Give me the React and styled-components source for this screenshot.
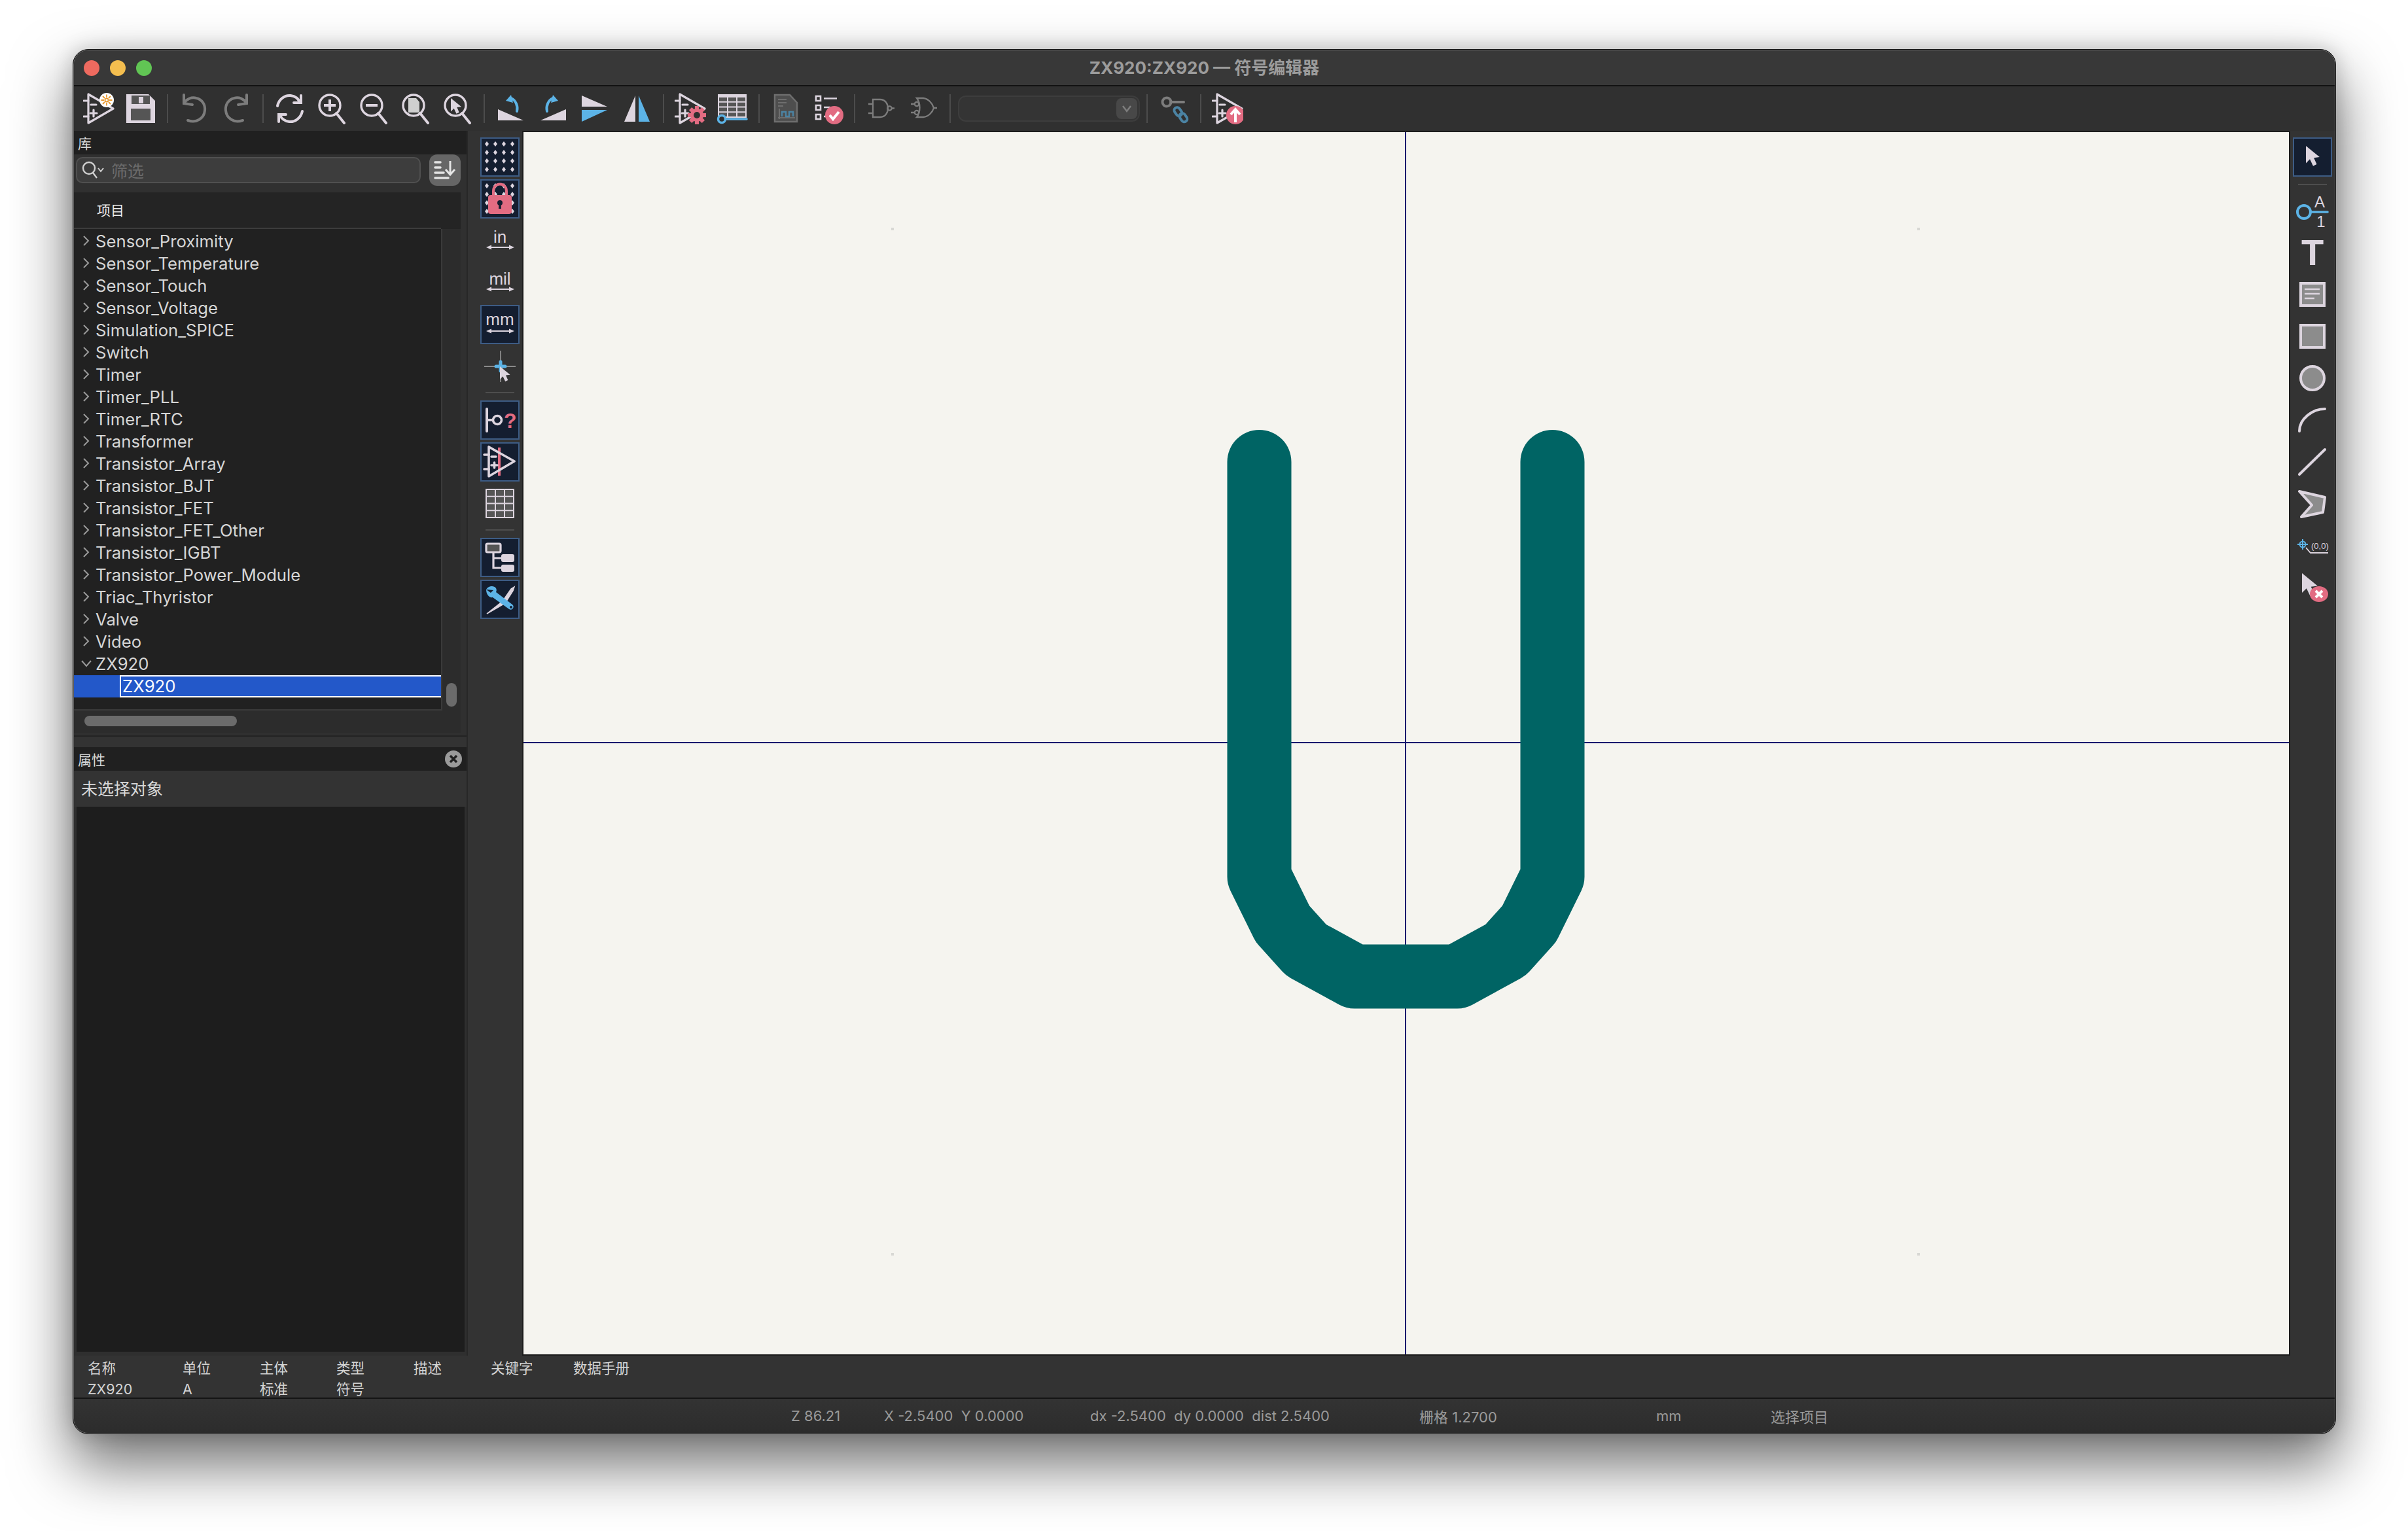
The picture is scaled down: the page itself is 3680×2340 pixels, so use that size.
import React from 'react';
import styled, { createGlobalStyle } from 'styled-components';

const L = '#DDD5DF', B = '#5CB3E6', P = '#E26C82', D = '#555555', G = '#7C7C7C', F = '#8C8C8C';
const SANS = `"Inter", "Noto Sans CJK SC", sans-serif`;

const Global = createGlobalStyle`
  html, body { margin: 0; padding: 0; background: #fff; }
  body { font-family: ${SANS}; }
`;
const Page = styled.div`
  width: 3680px; height: 2340px; box-sizing: border-box; padding: 75px 110px 148px 111px; background: #fff; overflow: hidden;
`;
const Window = styled.div`
  height: 100%; box-sizing: border-box; display: flex; flex-direction: column;
  background: #333; border: 1px solid #141414; border-radius: 24px; overflow: hidden;
  box-shadow: inset 0 0 0 1px #6a6a6a, 0 44px 90px 4px rgba(0,0,0,.55), 0 0 30px rgba(0,0,0,.18);
  padding: 1px;
`;
const TitleBar = styled.div`
  height: 53px; flex: none; display: grid; grid-template-columns: 1fr auto 1fr; align-items: center;
  background: #383838; border-bottom: 2px solid #121212; border-radius: 22px 22px 0 0;
`;
const Lights = styled.div`display: flex; gap: 16px; padding-left: 15px;`;
const Light = styled.span`width: 24px; height: 24px; border-radius: 50%; background: ${p => p.$c};`;
const Title = styled.div`font-size: 26px; font-weight: 700; color: #9c9c9c; white-space: nowrap; margin-top: -5px;`;

const Toolbar = styled.div`
  height: 68px; flex: none; display: flex; align-items: center; padding-left: 6px; background: #303030;
`;
const ToolBtn = styled.div`width: 64px; height: 48px; display: flex; justify-content: center; flex: none;`;
const Sep = styled.div`
  width: 18px; height: 44px; flex: none; display: flex; justify-content: center;
  &::before { content: ''; width: 2px; background: #4c4c4c; }
`;
const Ico = styled.svg.attrs({ viewBox: '0 0 48 48' })`width: 48px; height: 48px; display: block;`;
const VIco = styled.svg.attrs({ viewBox: '0 0 60 60' })`width: 60px; height: 60px; display: block; flex: none;`;

const Combo = styled.div`
  width: 278px; height: 40px; margin: 0 2px 0 3px; flex: none; box-sizing: border-box; display: flex; justify-content: flex-end; align-items: center;
  padding-right: 2px; background: #343434; border: 2px solid #3d3d3d; border-radius: 12px;
`;
const ComboBtn = styled.div`
  width: 32px; height: 32px; border-radius: 8px; background: #484848; display: flex; align-items: center; justify-content: center;
`;

const Main = styled.div`flex: 1; min-height: 0; display: flex;`;
const LeftDock = styled.div`width: 602px; flex: none; display: flex; flex-direction: column; border-right: 2px solid #272727; box-sizing: border-box;`;
const LibraryPanel = styled.div`height: 926px; flex: none; display: flex; flex-direction: column; background: #303030; border-bottom: 2px solid #232323; box-sizing: border-box;`;
const DockHeader = styled.div`
  height: 36px; flex: none; display: flex; align-items: center; justify-content: space-between; padding: 0 7px 0 6px;
  background: #202020; color: #d8d8d8; font-size: 21px;
`;
const SearchRow = styled.div`height: 58px; flex: none; display: flex; align-items: flex-start; padding-left: 3px; gap: 13px;`;
const SearchField = styled.div`
  width: 527px; height: 40px; margin-top: 4px; box-sizing: border-box; display: flex; align-items: center; gap: 10px; padding-left: 6px;
  background: #3d3d3d; border: 2px solid #505050; border-radius: 10px; color: #6b6b6b; font-size: 25px;
`;
const SortBtn = styled.div`width: 48px; height: 48px; border-radius: 12px; background: #666;`;
const TreeHead = styled.div`
  width: 591px; height: 56px; flex: none; box-sizing: border-box; background: #242424; display: flex;
`;
const TreeHeadCell = styled.div`
  width: 561px; height: 56px; box-sizing: border-box; border-bottom: 2px solid #3c3c3c; padding: 0 0 2px 35px; display: flex; align-items: center;
  font-size: 21px; color: #ececec;
`;
const TreeWrap = styled.div`width: 591px; height: 736px; flex: none; display: flex; background: #2c2c2c;`;
const Tree = styled.div`
  width: 563px; height: 736px; box-sizing: border-box; padding-top: 2px; background: #212121; border-right: 2px solid #3a3a3a; border-bottom: 2px solid #3a3a3a; overflow: hidden;
`;
const Row = styled.div`height: 34px; box-sizing: border-box; padding-bottom: 2px; display: flex; align-items: center; font-size: 25.7px; color: #d6d6d6; white-space: nowrap;`;
const Chevron = styled.svg.attrs({ viewBox: '0 0 20 20' })`width: 20px; height: 20px; margin: 0 4px 0 9px; flex: none;`;
const SelRow = styled.div`height: 34px; display: flex; background: #2358C9; padding-left: 70px;`;
const SelCell = styled.div`
  flex: 1; box-sizing: border-box; display: flex; align-items: center; padding: 0 0 1px 2px; font-size: 25.7px; color: #fff;
  border: 2px solid #fff; border-right: none;
`;
const VScroll = styled.div`width: 28px; flex: none; position: relative;`;
const VThumb = styled.div`position: absolute; left: 6px; top: 694px; width: 16px; height: 36px; border-radius: 8px; background: #6b6b6b;`;
const HScrollBar = styled.div`width: 591px; height: 34px; flex: none; background: #2c2c2c; padding: 8px 0 0 16px; box-sizing: border-box;`;
const HThumb = styled.div`width: 233px; height: 16px; border-radius: 8px; background: #6b6b6b;`;
const Gutter = styled.div`height: 16px; flex: none; background: #333;`;
const PropsPanel = styled.div`flex: 1; min-height: 0; display: flex; flex-direction: column; background: #2f2f2f;`;
const PropsInfo = styled.div`height: 55px; flex: none; box-sizing: border-box; padding: 0 0 3px 11px; display: flex; align-items: center; background: #333; color: #d8d8d8; font-size: 25px;`;
const PropsBody = styled.div`flex: 1; margin: 0 3px 6px 4px; background: #1d1d1d;`;

const LeftBar = styled.div`
  width: 83px; flex: none; box-sizing: border-box; padding: 10px 0 0 19px; display: flex; flex-direction: column; gap: 4px; background: #333;
`;
const RightBar = styled.div`
  flex: none; width: 68px; box-sizing: border-box; padding: 10px 0 0 4px; display: flex; flex-direction: column; gap: 4px; background: #333;
`;
const VBtn = styled.div`
  width: 60px; height: 60px; box-sizing: border-box; flex: none; display: flex; align-items: center; justify-content: center;
  ${p => p.$on ? 'background: #141E30; border: 2px solid #3D5C85;' : ''}
`;
const VSep = styled.div`width: 44px; height: 2px; flex: none; background: #4e4e4e; margin: ${p => p.$m || '5px 0 7px 8px'};`;
const TextTool = styled.span`font-family: "Liberation Sans", Arial, sans-serif; font-weight: 700; font-size: 56px; line-height: 60px; color: ${L};`;

const CanvasFrame = styled.div`flex: 1; min-width: 0; border: 2px solid #1c1c1c; background: #F5F4EF;`;
const CanvasSvg = styled.svg`display: block; width: 100%; height: 100%;`;

const Fields = styled.div`
  height: 66px; flex: none; box-sizing: border-box; border-bottom: 2px solid #141414; background: #333;
  display: grid; grid-template-columns: 145px 118px 117px 118px 118px 126px auto; grid-auto-rows: 28px; row-gap: 4px; align-content: start;
  padding: 6px 0 0 21px; justify-content: start;
`;
const FieldCell = styled.div`font-size: 21.5px; color: #d4d4d4; display: flex; align-items: center; white-space: nowrap; line-height: 1;`;
const StatusBar = styled.div`
  height: 52px; flex: none; display: flex; align-items: center; padding-left: 1096px; background: linear-gradient(#333, #2c2c2c); color: #9a9a9a; font-size: 22px;
  white-space: pre; border-radius: 0 0 22px 22px;
`;
const StatusItem = styled.div`width: ${p => p.$w}px; flex: none;`;

/* icons */
const AmpBase = ({ sw = 3.2 }) => (
  <g fill="none" stroke={L} strokeWidth={sw} strokeLinecap="round">
    <path d="M8 2V46L46 24Z" strokeLinejoin="round" />
    <path d="M1 12H8M1 36H8M12 18H20M11 31H21M16 26V36" />
  </g>
);
const Sun = () => (
  <g>
    <circle cx="36" cy="11" r="11" fill="#fff" />
    <circle cx="36" cy="11" r="2.6" fill="none" stroke="#E8982E" strokeWidth="1.8" />
    <path d="M36 2.5V7M36 15V19.5M27.5 11H32M40 11H44.5M30 5L33 8M39 14L42 17M42 5L39 8M33 14L30 17" stroke="#E8982E" strokeWidth="1.8" />
  </g>
);
const Gear = ({ x, y, r = 13 }) => {
  const teeth = [0, 45, 90, 135, 180, 225, 270, 315];
  return (
    <g transform={`translate(${x} ${y})`}>
      {teeth.map(a => <rect key={a} x={-r * .22} y={-r} width={r * .44} height={r * .5} fill={P} transform={`rotate(${a})`} />)}
      <circle r={r * .72} fill={P} />
      <circle r={r * .35} fill="#2f2f2f" />
    </g>
  );
};
const Save = () => (
  <Ico>
    <path d="M2 2H36L46 12V46H2Z" fill={L} />
    <path d="M10 4H38V17H10Z" fill={D} />
    <rect x="21" y="6" width="7" height="10" fill={L} />
    <rect x="9" y="24" width="30" height="18" fill={D} />
  </Ico>
);
const Undo = ({ flip }) => (
  <Ico>
    <g fill="none" stroke={G} strokeWidth="4" strokeLinecap="round" transform={flip ? 'matrix(-1 0 0 1 48 0)' : undefined}>
      <path d="M8 3V16L21 18" />
      <path d="M8 16C12 9 20 6 27 8C36 10 41 18 40 27C39 38 28 47 14 42" />
    </g>
  </Ico>
);
const Refresh = () => (
  <Ico>
    <g fill="none" stroke={L} strokeWidth="4" strokeLinecap="round">
      <path d="M5 20C7 10 16 3 25 4C32 5 37 9 39 14" />
      <path d="M41 4V15H30" />
      <path d="M43 28C41 38 32 45 23 44C16 43 11 39 9 34" />
      <path d="M7 44V33H18" />
    </g>
  </Ico>
);
const Mag = ({ children }) => (
  <Ico>
    <circle cx="21" cy="19" r="16" fill="none" stroke={L} strokeWidth="3.4" />
    <path d="M31 31L43 46" stroke={L} strokeWidth="4" strokeLinecap="round" />
    {children}
  </Ico>
);
const RotTri = ({ flip }) => (
  <Ico>
    <g transform={flip ? 'matrix(-1 0 0 1 48 0)' : undefined}>
      <path d="M4 42H43L4 25Z" fill={L} />
      <path d="M33 28C35 20 31 11 24 8" fill="none" stroke={B} strokeWidth="4" strokeLinecap="round" />
      <path d="M24 3L16 12L27 15Z" fill={B} />
    </g>
  </Ico>
);
const Table = ({ x = 2, y = 2, w = 44, h = 36, cols = 3, rows = 4, head = true }) => {
  const cells = [];
  const gap = 2, top = head ? 5 : 2, cw = (w - gap * (cols + 1)) / cols, ch = (h - top - gap * rows) / rows;
  for (let r = 0; r < rows; r++) for (let c = 0; c < cols; c++) {
    cells.push(<rect key={`${r}-${c}`} x={x + gap + c * (cw + gap)} y={y + top + r * (ch + gap)} width={cw} height={ch} fill={D} />);
  }
  return <g><rect x={x} y={y} width={w} height={h} fill={L} />{cells}</g>;
};
const Nand = () => (
  <Ico>
    <g fill="none" stroke={G} strokeWidth="2.3">
      <path d="M11 10H22C38 10 38 37 22 37H11Z" />
      <path d="M4 17H11M4 31H11M40 23.5H44" />
      <circle cx="36.5" cy="23.5" r="3.2" />
    </g>
  </Ico>
);
const Nor = () => (
  <Ico>
    <g fill="none" stroke={G} strokeWidth="2.3">
      <path d="M14 8H24C32 9 38 16 40 23C38 30 32 36 24 37H14C20 30 20 15 14 8Z" />
      <path d="M5 17H10.5M5 30H10.5M40 23H45" />
      <circle cx="14" cy="17" r="3.2" /><circle cx="14" cy="30" r="3.2" />
    </g>
  </Ico>
);
const Arrow = ({ x, y, s = 1, fill = L }) => (
  <path transform={`translate(${x} ${y}) scale(${s})`} d="M0 0L19 15.5L11 16.5L15 25.5L10 28L5.5 18.5L0 24Z" fill={fill} />
);
const Lbl = styled.text`font-family: "Liberation Sans", Arial, sans-serif; fill: ${p => p.$c || L}; font-size: ${p => p.$s}px; font-weight: ${p => p.$w || 400};`;
const Dots = () => {
  const out = [];
  for (const y of [10, 23, 36, 49]) for (const x of [10, 23, 36, 49]) out.push(<path key={`${x}${y}`} d={`M${x} ${y - 4}L${x + 3} ${y}L${x} ${y + 4}L${x - 3} ${y}Z`} fill={L} />);
  return <>{out}</>;
};
const UnitArrow = () => <path d="M9 40L17 36.5V39H44V36.5L52 40L44 43.5V41H17V43.5Z" fill={L} />;
const Unit = ({ t, s = 26 }) => (
  <VIco>
    <Lbl x="30" y="33" textAnchor="middle" $s={s}>{t}</Lbl>
    <UnitArrow />
  </VIco>
);

const NAMES = ['Sensor_Proximity', 'Sensor_Temperature', 'Sensor_Touch', 'Sensor_Voltage', 'Simulation_SPICE', 'Switch', 'Timer', 'Timer_PLL', 'Timer_RTC', 'Transformer', 'Transistor_Array', 'Transistor_BJT', 'Transistor_FET', 'Transistor_FET_Other', 'Transistor_IGBT', 'Transistor_Power_Module', 'Triac_Thyristor', 'Valve', 'Video'];

const U_PATH = 'M1924.5 706V1340L1960 1412L1996 1452L2070 1492.5H2227L2301 1452L2337 1412L2372.5 1340V706';
const GRID = [[1364, 350], [2932, 350], [1364, 1917], [2932, 1917]];

export default function App() {
  return (
    <Page>
      <Global />
      <Window>
        <TitleBar>
          <Lights>
            <Light $c="#EE6A5F" /><Light $c="#F4BE4F" /><Light $c="#61C554" />
          </Lights>
          <Title>ZX920:ZX920 — 符号编辑器</Title>
          <div />
        </TitleBar>

        <Toolbar>
          <ToolBtn><Ico><AmpBase /><Sun /></Ico></ToolBtn>
          <ToolBtn><Save /></ToolBtn>
          <Sep />
          <ToolBtn><Undo /></ToolBtn>
          <ToolBtn><Undo flip /></ToolBtn>
          <Sep />
          <ToolBtn><Refresh /></ToolBtn>
          <ToolBtn><Mag><path d="M12 19H30M21 10V28" stroke={L} strokeWidth="4" /></Mag></ToolBtn>
          <ToolBtn><Mag><path d="M12 19H30" stroke={L} strokeWidth="4" /></Mag></ToolBtn>
          <ToolBtn><Mag><path d="M13 8H25L30 14V30H13Z" fill="#CFCFCF" /></Mag></ToolBtn>
          <ToolBtn><Mag><Arrow x={14} y={8} s={.85} /></Mag></ToolBtn>
          <Sep />
          <ToolBtn><RotTri /></ToolBtn>
          <ToolBtn><RotTri flip /></ToolBtn>
          <ToolBtn><Ico><path d="M4 4L43 21H4Z" fill={L} /><path d="M4 26H43L4 44Z" fill={B} /></Ico></ToolBtn>
          <ToolBtn><Ico><path d="M5 44H22V4Z" fill={L} /><path d="M27 4V44H44Z" fill={B} /></Ico></ToolBtn>
          <Sep />
          <ToolBtn><Ico><AmpBase /><Gear x={34} y={34} r={14} /></Ico></ToolBtn>
          <ToolBtn><Ico><Table /><path d="M12 40H46" stroke={B} strokeWidth="3.5" strokeLinecap="round" /><circle cx="8" cy="40" r="5.5" fill="#2f2f2f" stroke={B} strokeWidth="3.5" /></Ico></ToolBtn>
          <Sep />
          <ToolBtn><Ico>
            <path d="M7 3H30L41 15V44H7Z" fill="#4e4e4e" stroke="#6e6e6e" strokeWidth="2.5" />
            <path d="M12 10H25M12 15H25M12 20H20M14 24V40M12 38H38" stroke="#6e6e6e" strokeWidth="2" fill="none" />
            <path d="M18 36V29H24V36H29V29H35V36" stroke="#4B83A3" strokeWidth="2.4" fill="none" />
          </Ico></ToolBtn>
          <ToolBtn><Ico>
            <g fill="none" stroke={L} strokeWidth="2.6">
              <rect x="6" y="5" width="7" height="7" /><rect x="6" y="19" width="7" height="7" /><rect x="6" y="33" width="7" height="7" />
              <path d="M18 8.5H38M18 22H28M18 36H22" />
            </g>
            <circle cx="34" cy="34" r="14" fill={P} />
            <path d="M27 34L32 40L41 29" fill="none" stroke="#fff" strokeWidth="4" />
          </Ico></ToolBtn>
          <Sep />
          <ToolBtn><Nand /></ToolBtn>
          <ToolBtn><Nor /></ToolBtn>
          <Sep />
          <Combo>
            <ComboBtn><svg viewBox="0 0 16 16" width="16" height="16"><path d="M2 4L8 12L14 4" fill="none" stroke="#7d7d7d" strokeWidth="2.5" /></svg></ComboBtn>
          </Combo>
          <Sep />
          <ToolBtn><Ico>
            <g transform="translate(3 0)">
              <circle cx="10" cy="14" r="6.5" fill="none" stroke="#7d7d7d" strokeWidth="4" />
              <path d="M16 14H36" stroke="#7d7d7d" strokeWidth="4" strokeLinecap="round" />
              <g fill="none" stroke="#4B83A3" strokeWidth="4"><rect x="23" y="22" width="9" height="14" rx="4.5" transform="rotate(-35 27 29)" /><rect x="31" y="31" width="9" height="14" rx="4.5" transform="rotate(-35 35 38)" /></g>
            </g>
          </Ico></ToolBtn>
          <Sep />
          <ToolBtn><Ico>
            <AmpBase />
            <circle cx="36" cy="34" r="14" fill={P} />
            <path d="M36 45V27M29 33L36 25L43 33" fill="none" stroke="#fff" strokeWidth="4" />
          </Ico></ToolBtn>
        </Toolbar>

        <Main>
          <LeftDock>
            <LibraryPanel>
              <DockHeader>库</DockHeader>
              <SearchRow>
                <SearchField>
                  <svg viewBox="0 0 36 30" width="36" height="30"><circle cx="12" cy="12" r="9" fill="none" stroke="#d0d0d0" strokeWidth="2.4" /><path d="M18 19L24 27" stroke="#d0d0d0" strokeWidth="2.4" /><path d="M26 12L30 17L34 12" fill="none" stroke="#d0d0d0" strokeWidth="2" /></svg>
                  筛选
                </SearchField>
                <SortBtn>
                  <svg viewBox="0 0 48 48" width="48" height="48"><path d="M9 12H17M9 20H17M9 28H22M9 36H29" stroke="#e4e4e4" strokeWidth="3.6" strokeLinecap="round" /><path d="M32 10V30M25 23L32 31L39 23" fill="none" stroke="#e4e4e4" strokeWidth="3" /></svg>
                </SortBtn>
              </SearchRow>
              <TreeHead><TreeHeadCell>项目</TreeHeadCell></TreeHead>
              <TreeWrap>
                <Tree>
                  {NAMES.map(n => (
                    <Row key={n}>
                      <Chevron><path d="M6 3L13 10L6 17" fill="none" stroke="#9a9a9a" strokeWidth="2" /></Chevron>
                      {n}
                    </Row>
                  ))}
                  <Row>
                    <Chevron><path d="M3 6L10 14L17 6" fill="none" stroke="#9a9a9a" strokeWidth="2" /></Chevron>
                    ZX920
                  </Row>
                  <SelRow><SelCell>ZX920</SelCell></SelRow>
                </Tree>
                <VScroll><VThumb /></VScroll>
              </TreeWrap>
              <HScrollBar><HThumb /></HScrollBar>
            </LibraryPanel>
            <Gutter />
            <PropsPanel>
              <DockHeader>
                属性
                <svg viewBox="0 0 26 26" width="26" height="26"><circle cx="13" cy="13" r="13" fill="#9a9a9a" /><path d="M8 8L18 18M18 8L8 18" stroke="#202020" strokeWidth="3.4" /></svg>
              </DockHeader>
              <PropsInfo>未选择对象</PropsInfo>
              <PropsBody />
            </PropsPanel>
          </LeftDock>

          <LeftBar>
            <VBtn $on><VIco><Dots /></VIco></VBtn>
            <VBtn $on><VIco>
              <Dots />
              <path d="M20 26V18C20 4 40 4 40 18V26" fill="none" stroke={P} strokeWidth="4" />
              <rect x="12" y="24" width="36" height="29" rx="4" fill={P} />
              <circle cx="30" cy="36" r="4" fill="#141E30" /><path d="M28.5 37H31.5L32 45H28Z" fill="#141E30" />
            </VIco></VBtn>
            <VBtn><Unit t="in" /></VBtn>
            <VBtn><Unit t="mil" /></VBtn>
            <VBtn $on><VIco><Lbl x="30" y="31" textAnchor="middle" $s={26}>mm</Lbl><UnitArrow /></VIco></VBtn>
            <VBtn><VIco>
              <path d="M6 30H54M31 6V54" stroke="#8a8a8a" strokeWidth="1.8" />
              <path d="M24 30H38M31 23V37" stroke={B} strokeWidth="5" strokeLinecap="round" />
              <Arrow x={30} y={30} s={.82} />
            </VIco></VBtn>
            <VSep />
            <VBtn $on><VIco>
              <path d="M10 13V47" stroke={L} strokeWidth="4" strokeLinecap="round" />
              <path d="M10 30H19" stroke={L} strokeWidth="4" />
              <circle cx="26" cy="30" r="6.5" fill="none" stroke={L} strokeWidth="3.6" />
              <Lbl x="36" y="42" $s={32} $c={P} $w={700}>?</Lbl>
            </VIco></VBtn>
            <VBtn $on><VIco>
              <path d="M29 8V51" stroke={P} strokeWidth="4" />
              <g fill="none" stroke={L} strokeWidth="3.6" strokeLinecap="round">
                <path d="M13 7V52L52 29Z" strokeLinejoin="round" />
                <path d="M6 19H13M6 41H13M17 22H24M17 35H26M21.5 31V39" />
              </g>
            </VIco></VBtn>
            <VBtn><VIco><Table x={8} y={7} w={44} h={45} cols={3} rows={4} head={false} /></VIco></VBtn>
            <VSep />
            <VBtn $on><VIco>
              <rect x="9" y="9" width="22" height="13" rx="2" fill={D} stroke={L} strokeWidth="3.2" />
              <path d="M20 22V46H34M20 31H34" fill="none" stroke={L} strokeWidth="3.2" />
              <rect x="32" y="25" width="20" height="12" rx="3" fill={L} />
              <rect x="32" y="41" width="20" height="11" rx="3" fill={L} />
            </VIco></VBtn>
            <VBtn $on><VIco>
              <path d="M10 52L34 33L47 14L52 11L50 17L38 36Z" fill={L} stroke={L} strokeWidth="1.5" />
              <path d="M9 15C12 10 20 8 24 13C25 15 25 17 24 19L49 38C53 41 49 48 44 45L19 27C14 28 9 23 9 15L16 20L20 16Z" fill={B} />
              <circle cx="47" cy="42" r="2" fill="#141E30" />
            </VIco></VBtn>
          </LeftBar>

          <CanvasFrame>
            <CanvasSvg viewBox="800 202 2698 1868">
              {GRID.map(([x, y]) => <rect key={`${x}${y}`} x={x - 2} y={y - 2} width="4" height="4" fill="#d8d8d4" />)}
              <path d="M2148 202V2070M800 1135H3498" stroke="#14146E" strokeWidth="2" fill="none" />
              <path d={U_PATH} fill="none" stroke="#006464" strokeWidth="98" strokeLinecap="round" strokeLinejoin="round" />
            </CanvasSvg>
          </CanvasFrame>

          <RightBar>
            <VBtn $on><VIco><Arrow x={20} y={13} s={1.1} /></VIco></VBtn>
            <VSep $m="7px 0 5px 8px" />
            <VBtn><VIco>
              <circle cx="17" cy="32" r="10" fill="none" stroke={B} strokeWidth="4" />
              <path d="M27 32H53" stroke={B} strokeWidth="3.6" strokeLinecap="round" />
              <Lbl x="41" y="25" textAnchor="middle" $s={24}>A</Lbl>
              <Lbl x="43" y="55" textAnchor="middle" $s={24}>1</Lbl>
            </VIco></VBtn>
            <VBtn><TextTool>T</TextTool></VBtn>
            <VBtn><VIco>
              <rect x="12" y="13" width="36" height="34" fill={F} stroke={L} strokeWidth="4" />
              <path d="M18 22H41M18 29H41M18 36H33" stroke={L} strokeWidth="2.4" />
            </VIco></VBtn>
            <VBtn><VIco><rect x="12" y="13" width="36" height="34" fill={F} stroke={L} strokeWidth="4" /></VIco></VBtn>
            <VBtn><VIco><ellipse cx="30" cy="30" rx="18" ry="18" fill={F} stroke={L} strokeWidth="4" /></VIco></VBtn>
            <VBtn><VIco><path d="M10 47C10 28 30 13 49 13" fill="none" stroke={L} strokeWidth="4" strokeLinecap="round" /></VIco></VBtn>
            <VBtn><VIco><path d="M10 49L49 11" fill="none" stroke={L} strokeWidth="4" strokeLinecap="round" /></VIco></VBtn>
            <VBtn><VIco><path d="M10 11L49 20L46 43L13 50L29 32Z" fill={F} stroke={L} strokeWidth="4" strokeLinejoin="round" /></VIco></VBtn>
            <VBtn><VIco>
              <circle cx="15" cy="28" r="4.5" fill="none" stroke={B} strokeWidth="2" />
              <path d="M7 28H23M15 20V36" stroke={B} strokeWidth="2" />
              <path d="M20 33L27 41H54" fill="none" stroke={L} strokeWidth="1.8" />
              <Lbl x="28" y="35" $s={13}>(0,0)</Lbl>
            </VIco></VBtn>
            <VBtn><VIco>
              <Arrow x={14} y={8} s={1.25} />
              <ellipse cx="40" cy="40" rx="14" ry="12" fill={P} />
              <path d="M35 35L45 45M45 35L35 45" stroke="#fff" strokeWidth="4" />
            </VIco></VBtn>
          </RightBar>
        </Main>

        <Fields>
          {['名称', '单位', '主体', '类型', '描述', '关键字', '数据手册'].map(t => <FieldCell key={t}>{t}</FieldCell>)}
          {['ZX920', 'A', '标准', '符号'].map(t => <FieldCell key={t}>{t}</FieldCell>)}
        </Fields>
        <StatusBar>
          <StatusItem $w={142}>Z 86.21</StatusItem>
          <StatusItem $w={315}>X -2.5400  Y 0.0000</StatusItem>
          <StatusItem $w={503}>dx -2.5400  dy 0.0000  dist 2.5400</StatusItem>
          <StatusItem $w={362}>栅格 1.2700</StatusItem>
          <StatusItem $w={175}>mm</StatusItem>
          <StatusItem $w={200}>选择项目</StatusItem>
        </StatusBar>
      </Window>
    </Page>
  );
}
